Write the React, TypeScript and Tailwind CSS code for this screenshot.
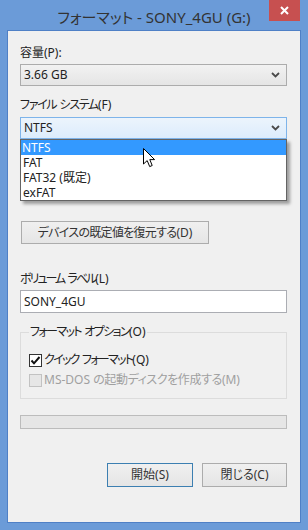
import React from 'react';

const font = { fontFamily: '"Noto Sans", "Noto Sans CJK JP", sans-serif' };

function Chevron() {
  return (
    <svg width="9" height="6" viewBox="0 0 9 6" className="shrink-0">
      <path d="M1 1 L4.5 4.5 L8 1" fill="none" stroke="#4a4a4a" strokeWidth="1.8" />
    </svg>
  );
}

function Cursor() {
  return (
    <svg width="13" height="20" viewBox="0 0 13 20">
      <path
        d="M0.5 0.5 L0.5 16 L4.2 12.6 L6.7 18.6 L9.2 17.5 L6.8 11.6 L11.6 11.6 Z"
        fill="#fff"
        stroke="#000"
        strokeWidth="1"
        strokeLinejoin="round"
      />
    </svg>
  );
}

function Checkbox({ checked, disabled }: { checked?: boolean; disabled?: boolean }) {
  return (
    <div
      className={
        disabled
          ? 'flex h-[13px] w-[13px] shrink-0 items-center justify-center border border-[#c2c2c2] bg-[#e6e6e6]'
          : 'flex h-[13px] w-[13px] shrink-0 items-center justify-center border border-[#333] bg-white'
      }
    >
      {checked && (
        <svg width="11" height="11" viewBox="0 0 11 11">
          <path d="M1.5 5.5 L4 8.3 L9.5 2" fill="none" stroke="#111" strokeWidth="2" />
        </svg>
      )}
    </div>
  );
}

const options = ['NTFS', 'FAT', 'FAT32 (既定)', 'exFAT'];

export default function App() {
  return (
    <div
      className="relative flex h-[530px] w-[308px] flex-col bg-[#6b9bd8] px-[7px] pb-[7px] text-[12px] leading-[16px] text-[#222] [font-feature-settings:'palt']"
      style={font}
    >
      {/* title bar */}
      <div className="flex h-[30px] shrink-0 items-center justify-center pt-[3px] text-[15px] text-[#333]">
        フォーマット - SONY_4GU (G:)
      </div>
      <div className="absolute right-[8px] top-0 flex h-[21px] w-[31px] items-center justify-center bg-[#c75050]">
        <svg width="9" height="9" viewBox="0 0 9 9">
          <path d="M1 1 L8 8 M8 1 L1 8" stroke="#fff" strokeWidth="2" />
        </svg>
      </div>

      {/* client area */}
      <div className="flex flex-1 flex-col border border-[#4f80c6] bg-[#f0f0f0] pl-[12px] pr-[13px]">
        <div className="mt-[14px]">容量(P):</div>
        <div className="mt-[3px] flex h-[22px] items-center justify-between border border-[#acacac] bg-gradient-to-b from-[#f2f2f2] to-[#e5e5e5] pl-[3px] pr-[6px]">
          <span>3.66 GB</span>
          <Chevron />
        </div>

        <div className="mt-[11px]">
          <span className="tracking-[-1.3px]">ファイル</span> <span className="tracking-[-1.3px]">システム</span>(F)
        </div>
        <div className="relative mt-[4px]">
          <div className="flex h-[22px] items-center justify-between border border-[#7eb4ea] bg-gradient-to-b from-[#ecf4fc] to-[#dcecfc] pl-[3px] pr-[6px]">
            <span>NTFS</span>
            <Chevron />
          </div>
          <div className="absolute left-0 top-full z-10 w-full border border-[#646464] bg-white shadow-[3px_3px_3px_rgba(0,0,0,0.35)]">
            {options.map((o, i) => (
              <div
                key={o}
                className={
                  i === 0
                    ? 'h-[15px] bg-[#3399ff] pl-[1px] leading-[15px] text-white'
                    : 'h-[15px] pl-[2px] leading-[15px] text-[#222]'
                }
              >
                {o}
              </div>
            ))}
          </div>
          <div className="absolute left-[123px] top-[31px] z-20">
            <Cursor />
          </div>
        </div>

        <div className="ml-[1px] mt-[82px] flex h-[23px] w-[188px] items-center justify-center border border-[#acacac] bg-gradient-to-b from-[#f0f0f0] to-[#e5e5e5] text-[#333]">
          <span className="tracking-[-0.7px]">デバイスの既定値を復元する</span>(D)
        </div>

        <div className="mt-[27px]">
          <span className="tracking-[-2px]">ボリューム</span> <span className="tracking-[-2px]">ラベル</span>(L)
        </div>
        <div className="mt-[3px] flex h-[23px] items-center border border-[#abadb3] bg-white pl-[3px]">
          SONY_4GU
        </div>

        <fieldset className="mt-[11px] border border-[#dcdcdc] pb-[10px] pl-[8px]">
          <legend className="px-[1px]">
            <span className="tracking-[-1.6px]">フォーマット</span> <span className="tracking-[-1.6px]">オプション</span>(O)
          </legend>
          <div className="mt-[12px] flex h-[16px] items-center gap-[2px]">
            <Checkbox checked />
            <span>
              <span className="tracking-[-1.7px]">クイック</span> <span className="tracking-[-1.7px]">フォーマット</span>(Q)
            </span>
          </div>
          <div className="mt-[4px] flex h-[16px] items-center gap-[2px]">
            <Checkbox disabled />
            <span className="text-[#a0a0a0]">
              MS-DOS <span className="tracking-[-0.4px]">の起動ディスクを作成する</span>(M)
            </span>
          </div>
        </fieldset>

        <div className="mt-[16px] h-[14px] border border-[#bcbcbc] bg-[#e6e6e6]" />

        <div className="mt-[34px] flex justify-end gap-[9px] text-[#333]">
          <div className="flex h-[24px] w-[86px] items-center justify-center border border-[#3c7fb1] bg-gradient-to-b from-[#f0f0f0] to-[#e5e5e5]">
            開始(S)
          </div>
          <div className="flex h-[24px] w-[85px] items-center justify-center border border-[#acacac] bg-gradient-to-b from-[#f0f0f0] to-[#e5e5e5]">
            閉じる(C)
          </div>
        </div>
      </div>
    </div>
  );
}
